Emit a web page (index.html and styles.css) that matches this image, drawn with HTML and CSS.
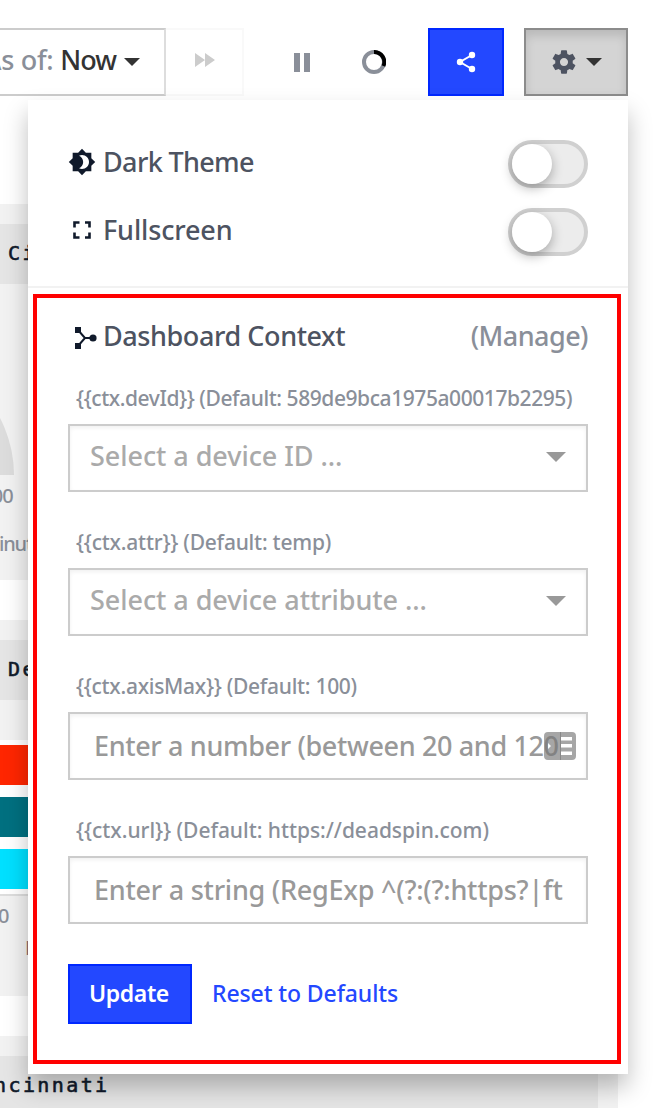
FILE: index.html
```html
<!DOCTYPE html>
<html lang="en">
<head>
<meta charset="utf-8">
<title>Dashboard</title>
<link rel="stylesheet" href="styles.css">
</head>
<body>
<div class="page">
  <header class="toolbar">
    <div class="asof"><span class="asof-label">As of:</span><span class="asof-value">Now</span><span class="caret"></span></div>
    <div class="forward">
      <svg width="20" height="14" viewBox="0 0 20 14"><path d="M0 0l10 7-10 7zM10 0l10 7-10 7z" fill="#ccc"/></svg>
    </div>
    <div class="pause"><i></i><i></i></div>
    <svg class="spinner" width="24" height="24" viewBox="0 0 24 24" fill="none" stroke-width="4"><circle cx="12" cy="12" r="10" stroke="#8a8f99"/><path d="M12 2a10 10 0 0 1 9.4 14" stroke="#000"/></svg>
    <div class="share">
      <svg width="20" height="22" viewBox="0 0 20 22" fill="#fff"><path d="M16 4L4 11l12 7" fill="none" stroke="#fff" stroke-width="2"/><circle cx="16" cy="4" r="3.2"/><circle cx="4" cy="11" r="3.2"/><circle cx="16" cy="18" r="3.2"/></svg>
    </div>
    <div class="settings">
      <svg width="28" height="28" viewBox="0 0 24 24" fill="#4d5361"><path d="M19.43 12.98c.04-.32.07-.64.07-.98s-.03-.66-.07-.98l2.11-1.65c.19-.15.24-.42.12-.64l-2-3.46c-.12-.22-.39-.3-.61-.22l-2.49 1c-.52-.4-1.08-.73-1.69-.98l-.38-2.65C14.46 2.18 14.25 2 14 2h-4c-.25 0-.46.18-.49.42l-.38 2.65c-.61.25-1.17.59-1.69.98l-2.49-1c-.23-.09-.49 0-.61.22l-2 3.46c-.13.22-.07.49.12.64l2.11 1.65c-.04.32-.07.65-.07.98s.03.66.07.98l-2.11 1.65c-.19.15-.24.42-.12.64l2 3.46c.12.22.39.3.61.22l2.49-1c.52.4 1.08.73 1.69.98l.38 2.65c.03.24.24.42.49.42h4c.25 0 .46-.18.49-.42l.38-2.65c.61-.25 1.17-.59 1.69-.98l2.49 1c.23.09.49 0 .61-.22l2-3.46c.12-.22.07-.49-.12-.64l-2.11-1.65zM12 15.5c-1.93 0-3.5-1.57-3.5-3.5s1.57-3.5 3.5-3.5 3.5 1.57 3.5 3.5-1.57 3.5-3.500 3.5z"/></svg>
      <span class="caret"></span>
    </div>
  </header>

  <main class="tiles">
    <section class="tile">
      <h2 class="tile-title">Ci</h2>
      <svg class="gauge" width="34" height="191" viewBox="-20 0 34 191"><circle cx="-109" cy="191" r="123" fill="#dcdcdc"/></svg>
      <div class="gauge-max">00</div>
      <div class="gauge-unit">inutes</div>
    </section>
    <section class="tile">
      <h2 class="tile-title">De</h2>
      <div class="bars"><i class="bar red"></i><i class="bar teal"></i><i class="bar cyan"></i></div>
      <div class="axis-zero">0</div>
      <div class="axis-name">M</div>
    </section>
    <section class="tile">
      <h2 class="tile-title long">ncinnati</h2>
    </section>
  </main>

  <div class="menu">
    <div class="options">
      <div class="option">
        <svg class="icon" width="28" height="28" viewBox="0 0 24 24"><path d="M20 8.69V4h-4.69L12 .69 8.69 4H4v4.69L.69 12 4 15.31V20h4.69L12 23.31 15.31 20H20v-4.69L23.31 12 20 8.69zM12 18c-.89 0-1.74-.2-2.5-.55C11.56 16.5 13 14.42 13 12s-1.44-4.5-3.5-5.45C10.26 6.2 11.11 6 12 6c3.31 0 6 2.69 6 6s-2.69 6-6 6z"/></svg>
        <span class="option-name dark">Dark Theme</span><span class="toggle"><i></i></span>
      </div>
      <div class="option">
        <svg class="icon" width="28" height="28" viewBox="0 0 28 28"><path d="M6.500 11.500v-5h5M17 6.500h4.500v5M21.500 16.500v5h-4.500M11.500 21.500h-5v-5" fill="none" stroke="#101a2b" stroke-width="2.600"/></svg>
        <span class="option-name full">Fullscreen</span><span class="toggle"><i></i></span>
      </div>
    </div>

    <section class="context">
      <div class="context-head">
        <svg class="icon-ctx" width="24" height="24" viewBox="0 0 24 24"><path d="M4 4l7 8-7 8M11 12h8" fill="none" stroke="#101a2b" stroke-width="2"/><path d="M1 1h6v6H1zM1 17h6v6H1z"/><circle cx="19" cy="12" r="3.600"/></svg>
        <span class="context-name">Dashboard Context</span><span class="manage">(Manage)</span>
      </div>
      <div class="field"><label class="l-dev">{{ctx.devId}} (Default: 589de9bca1975a00017b2295)</label>
        <div class="box select"><span>Select a device ID ...</span><i class="caret big"></i></div></div>
      <div class="field"><label class="l-attr">{{ctx.attr}} (Default: temp)</label>
        <div class="box select"><span>Select a device attribute ...</span><i class="caret big"></i></div></div>
      <div class="field"><label class="l-max">{{ctx.axisMax}} (Default: 100)</label>
        <div class="box input number"><span>Enter a number (between 20 and 120</span>
          <svg class="autofill" width="32" height="28" viewBox="0 0 32 28"><path fill="#777" fill-rule="evenodd" opacity=".65" d="M4 0h24a4 4 0 0 1 4 4v20a4 4 0 0 1-4 4H4a4 4 0 0 1-4-4V4a4 4 0 0 1 4-4zM17 5v3.500h11V5zM17 12v3.500h11V12zM17 19.500V23h11v-3.500zM4 11v6l3-3z"/><path d="M16.500 0v28" stroke="#888"/></svg>
        </div></div>
      <div class="field"><label class="l-url">{{ctx.url}} (Default: https://deadspin.com)</label>
        <div class="box input string"><span>Enter a string (RegExp ^(?:(?:https?|ft</span></div></div>
      <div class="actions"><button class="update">Update</button><a class="reset">Reset to Defaults</a></div>
    </section>
  </div>
</div>
</body>
</html>
```
FILE: styles.css
```css
* { box-sizing: border-box; }
body { margin: 0; background: #fff; font-family: "Noto Sans", sans-serif; font-weight: 500; }
.page { position: relative; width: 658px; height: 1108px; overflow: hidden; }
svg { display: block; flex: none; }

.toolbar { display: flex; align-items: center; height: 124px; }
.asof { flex: none; display: flex; align-items: center; justify-content: flex-end; width: 186px; height: 68px; margin-left: -20px; padding: 0 24px 0 0; border: 2px solid #ccc; border-right-color: #ddd; font-size: 27px; line-height: 36px; }
.asof-label { color: #8a8f99; letter-spacing: -.3px; margin-right: 7px; padding-bottom: 4px; }
.asof-value { color: #333; font-weight: 550; letter-spacing: -1px; margin-right: 8px; padding-bottom: 4px; }
.caret { width: 0; height: 0; border: 8px solid transparent; border-top-color: #333; border-bottom: 0; }
.caret.big { border-width: 10px 10px 0; border-top-color: #999; }
.forward { flex: none; display: flex; align-items: center; justify-content: center; width: 78px; height: 68px; border: 2px solid #f9f9f9; border-left: 0; padding: 0 0 4px 2px; }
.pause { display: flex; justify-content: space-between; width: 16px; height: 19px; margin-left: 50px; }
.pause i { width: 6px; background: #8a8f99; }
.spinner { margin-left: 52px; }
.share { flex: none; display: flex; align-items: center; justify-content: center; width: 76px; height: 68px; margin-left: 42px; background: #2348ff; border: 2px solid #0028ff; }
.settings { flex: none; display: flex; align-items: center; width: 104px; height: 68px; margin-left: 20px; padding-left: 24px; gap: 8px; background: #d4d4d4; border: 2px solid #8c8c8c; box-shadow: inset 0 6px 10px rgba(0,0,0,.125); }

.tiles { display: flex; flex-direction: column; gap: 40px; width: 638px; margin: 80px 0 0 -20px; }
.tile { height: 376px; padding-top: 20px; background: #f2f2f2; color: #8a8f99; font-size: 20px; line-height: 28px; }
.tile-title { width: 618px; height: 60px; margin: 0; padding-left: 28px; background: #e5e5e5; color: #101a2b; font: 400 20px/58px "DejaVu Sans Mono", monospace; letter-spacing: 2.4px; -webkit-text-stroke: .6px #101a2b; }
.tile-title.long { padding-left: 14px; }
.gauge { width: 34px; height: 191px; }
.gauge-max { width: 33px; margin-top: 7px; text-align: right; letter-spacing: -.8px; }
.gauge-unit { margin-top: 20px; padding-left: 19px; letter-spacing: -1.2px; }
.bars { display: flex; flex-direction: column; gap: 12px; height: 156px; margin-top: 40px; padding-top: 5px; background: #fff; border-bottom: 2px solid #ddd; }
.bar { height: 40px; }
.red { background: #ff2600; }
.teal { background: #007080; }
.cyan { background: #00e0ff; }
.axis-zero { margin-top: 6px; padding-left: 18px; }
.axis-name { margin-top: 4px; padding-left: 45px; color: #8a6f6f; }

.menu { position: absolute; left: 28px; top: 100px; width: 600px; height: 974px; background: #fff; box-shadow: 0 13px 22px rgba(0,0,0,.25); display: flex; flex-direction: column; }
.options { height: 188px; padding: 30px 40px 0; border-bottom: 2px solid #f2f2f2; }
.option { display: flex; align-items: center; height: 68px; }
.icon { fill: #101a2b; margin: -4px 8px 0 0; }
.option-name { flex: 1; margin: -5px 0 0 -1px; color: #4d5361; font-size: 27px; line-height: 36px; }
.dark { letter-spacing: -.65px; }
.full { letter-spacing: -.15px; }
.toggle { width: 80px; height: 48px; border: 4px solid #d0d0d0; border-radius: 24px; background: #ececec; }
.toggle i { display: block; width: 40px; height: 40px; border-radius: 50%; background: #fff; box-shadow: 0 4px 12px rgba(0,0,0,.3); }

.context { margin: 6px 7px 10px 5px; height: 770px; padding: 22px 29px 0 31px; border: 4px solid #f00; }
.context-head { display: flex; align-items: center; height: 31px; margin-bottom: 35px; font-size: 27px; color: #4d5361; }
.icon-ctx { margin: 5px 4px 0 6px; fill: #101a2b; }
.context-name { flex: 1; margin-left: 1px; letter-spacing: -.42px; }
.manage { color: #8a8f99; letter-spacing: -.55px; }
.field { margin-bottom: 38px; }
.field label { display: block; height: 24px; margin: 0 0 14px 8px; color: #8a8f99; font-size: 21px; line-height: 24px; white-space: nowrap; }
.l-dev { letter-spacing: -.43px; }
.l-attr { letter-spacing: -.22px; }
.l-max { letter-spacing: -.28px; }
.l-url { letter-spacing: -.03px; }
.box { position: relative; display: flex; align-items: center; height: 68px; border: 2px solid #ccc; box-shadow: inset 0 2px 4px rgba(0,0,0,.06); font-size: 27px; line-height: 36px; white-space: nowrap; }
.box span { flex: 1; padding-bottom: 5px; }
.select { padding: 0 20px 0 20px; color: #aaa; letter-spacing: -.06px; }
.select .caret { margin-top: -2px; }
.input { padding-left: 24px; color: #999; }
.input span { padding-bottom: 1px; }
.number span { letter-spacing: -.36px; }
.string span { letter-spacing: -.25px; }
.autofill { position: absolute; right: 10px; top: 18px; }
.actions { display: flex; align-items: center; margin-top: 40px; font-size: 23px; }
.update { width: 124px; height: 60px; padding: 0 2px 2px 0; border: 2px solid #0028ff; background: #2348ff; color: #fff; font: 600 23px "Noto Sans", sans-serif; letter-spacing: -.4px; }
.reset { margin: -2px 0 0 20px; color: #2348ff; letter-spacing: -.1px; }
```
